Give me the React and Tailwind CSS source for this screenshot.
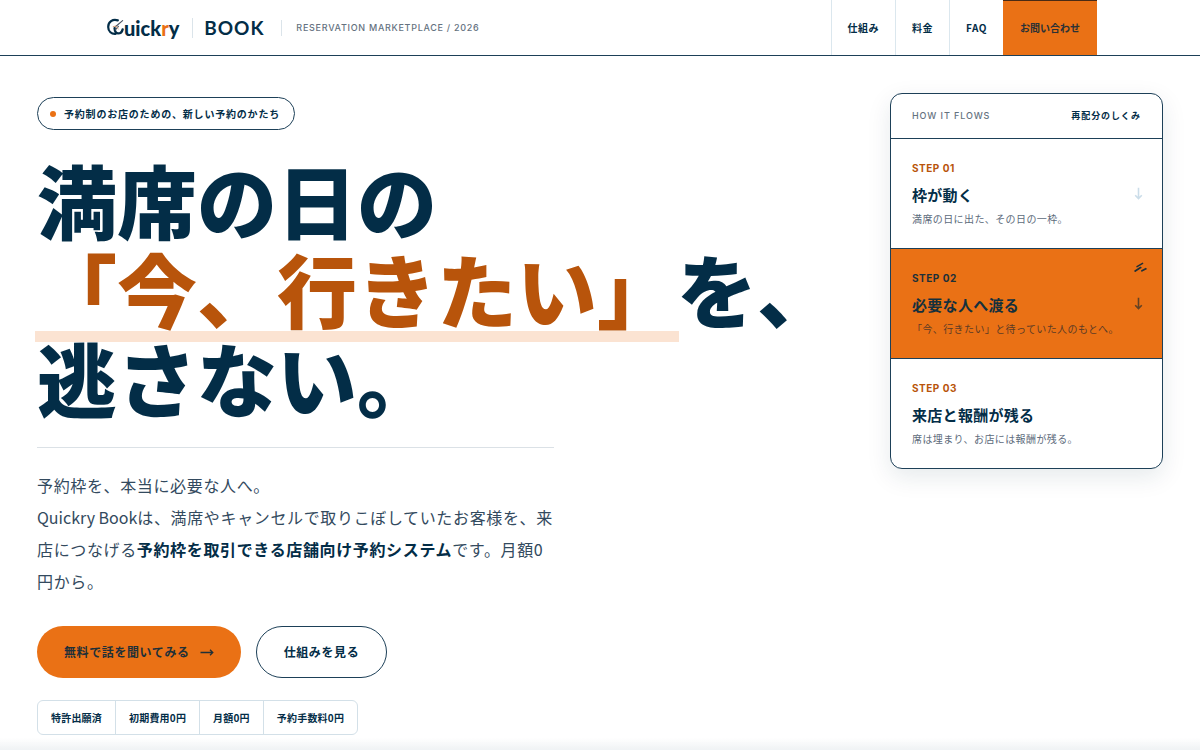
import React from 'react';

const navItems = [
  { label: '仕組み', href: '#flow' },
  { label: '料金', href: '#price' },
  { label: 'FAQ', href: '#faq' },
];

const steps = [
  { no: 'STEP 01', title: '枠が動く', text: '満席の日に出た、その日の一枠。', arrow: true },
  { no: 'STEP 02', title: '必要な人へ渡る', text: '「今、行きたい」と待っていた人のもとへ。', arrow: true, active: true },
  { no: 'STEP 03', title: '来店と報酬が残る', text: '席は埋まり、お店には報酬が残る。' },
];

const tags = ['特許出願済', '初期費用0円', '月額0円', '予約手数料0円'];

function QuickryLogo() {
  return (
    <span className="flex items-center">
      <svg width="17" height="20" viewBox="0 0 17 20" fill="none" aria-hidden="true">
        <path d="M10.8 2.4C5.6.6 1.2 4.1 1.2 8.9c0 4.6 3.4 7.3 7.2 7" stroke="#032d47" strokeWidth="2.2" strokeLinecap="round" />
        <path d="M7.6 10.2c.2 3.4 1.4 5.2 3.6 5.2 2.4 0 3.8-1.4 4.4-4" stroke="#032d47" strokeWidth="2.4" strokeLinecap="round" />
        <path d="M15.6 2.6 8.4 8.8M11.4 8.4l-3 3.4" stroke="#4b5563" strokeWidth="1.2" strokeLinecap="round" />
        <path d="m6.2 8.6 2.8-.6 2.2 3" stroke="#d9a37c" strokeWidth="1" strokeLinecap="round" />
      </svg>
      <span className="font-[Lato,sans-serif] text-[20px] leading-5 font-black">
        uick<span className="text-[#ea7115]">r</span>y
      </span>
    </span>
  );
}

function DownArrow({ className }) {
  return (
    <svg className={className} width="9" height="13" viewBox="0 0 9 13" fill="none" stroke="currentColor" strokeWidth="1.6" aria-hidden="true">
      <path d="M4.5 .8v10.6M1.2 8.2l3.3 3.3 3.3-3.3" />
    </svg>
  );
}

function Spark() {
  return (
    <svg className="absolute top-[13px] right-[15px]" width="13" height="11" viewBox="0 0 13 11" fill="none" stroke="#1f2f38" strokeLinecap="round" aria-hidden="true">
      <path d="M3 4.6 8.6 1.4" strokeWidth="1.5" />
      <path d="M1.2 9 6.6 5.6" strokeWidth="1.8" />
      <path d="m8 8.8 3.8-2" strokeWidth="1.8" />
    </svg>
  );
}

function Step({ step }) {
  const { active } = step;
  return (
    <li className={`relative flex items-center justify-between border-t border-[#1d4058] px-[21px] pt-[21px] pb-[21px] ${active ? 'bg-[#ea7115]' : ''}`}>
      <div>
        <p className={`font-[Inter,sans-serif] text-[10px] leading-4 font-bold tracking-wider ${active ? 'text-[#1c3039]' : 'text-[#b8540b]'}`}>{step.no}</p>
        <h3 className={`mt-[7px] text-[15px] leading-6 font-bold tracking-[0.02em] ${active ? 'text-[#14303d]' : ''}`}>{step.title}</h3>
        <p className={`mt-1 text-[10px] leading-4 tracking-[0.04em] whitespace-nowrap ${active ? 'text-[#5c3b25]' : 'text-[#5d6b7b]'}`}>{step.text}</p>
      </div>
      {step.arrow && <DownArrow className={`absolute right-[19px] ${active ? 'text-[#634224]' : 'text-[#cbdde9]'}`} />}
      {active && <Spark />}
    </li>
  );
}

export default function App() {
  return (
    <div className="min-h-screen bg-white font-['Noto_Sans_CJK_JP',sans-serif] text-[#032d47]">
      <header className="border-b border-[#1d4058]">
        <div className="mx-auto flex h-[55px] max-w-[994px] items-stretch justify-between">
          <div className="flex items-center pl-1">
            <a href="#top" aria-label="Quickry Book" className="flex items-center">
              <QuickryLogo />
              <span className="ml-[13px] h-5 w-px bg-[#dbe4ea]" />
              <span className="ml-[11px] font-[Lato,sans-serif] text-[19px] leading-6 font-bold tracking-wider">BOOK</span>
            </a>
            <span className="ml-[17px] h-4 w-px bg-[#dbe4ea]" />
            <span className="ml-3.5 font-[Inter,sans-serif] text-[9px] leading-4 font-medium tracking-[0.08em] text-[#65727f]">RESERVATION MARKETPLACE / 2026</span>
          </div>
          <nav className="flex items-stretch text-[10px] font-bold">
            {navItems.map((item) => (
              <a key={item.label} href={item.href} className="flex items-center border-l border-[#dbe7ee] px-4 pb-px tracking-wider">{item.label}</a>
            ))}
            <a href="#contact" className="flex items-center border-t border-[#4a2a14] bg-[#ea7115] px-[17px] pb-0.5 text-[#2b3136]">お問い合わせ</a>
          </nav>
        </div>
      </header>

      <main id="top" className="mx-auto flex max-w-[1200px] items-start justify-between px-[37px] pt-[37px] pb-4">
        <section>
          <p className="mt-1 inline-flex h-[33px] items-center gap-2 rounded-full border border-[#1d4058] px-3 text-[10px] font-bold">
            <span className="size-1.5 rounded-full bg-[#ea7115]" />
            <span className="pr-0.5 tracking-[0.08em]">予約制のお店のための、新しい予約のかたち</span>
          </p>
          <h1 className="mt-6 text-[80px] leading-[89px] font-black whitespace-nowrap">
            満席の日の
            <br />
            <span className="relative inline-block text-[#b8540b]">
              <span className="absolute -inset-x-0.5 -bottom-2.5 h-[11px] bg-[#fbe3d2]" />
              <span className="relative">「今、行きたい」</span>
            </span>
            を、
            <br />
            逃さない。
          </h1>
          <div className="mt-[26px] max-w-[517px] border-t border-[#dbe1e6] pt-[21px]" />
          <p className="max-w-[520px] text-base leading-8 tracking-[0.04em] text-[#334a5e]">
            予約枠を、本当に必要な人へ。
            <br />
            <span className="tracking-normal">Quickry Book</span>は、満席やキャンセルで取りこぼしていたお客様を、来店につなげる
            <strong className="font-bold text-[#032d47]">予約枠を取引できる店舗向け予約システム</strong>
            です。月額0円から。
          </p>
          <div className="mt-[29px] flex gap-[15px] text-[12px] font-bold tracking-wider">
            <a href="#contact" className="flex h-[52px] items-center gap-2.5 rounded-full bg-[#ea7115] px-[27px] text-[#1f3038]">
              無料で話を聞いてみる
              <svg width="14" height="9" viewBox="0 0 14 9" fill="none" stroke="currentColor" strokeWidth="1.3" aria-hidden="true">
                <path d="M.5 4.5h12M10 1.8l2.8 2.7L10 7.2" />
              </svg>
            </a>
            <a href="#flow" className="flex h-[52px] items-center rounded-full border border-[#1d4058] px-[27px]">仕組みを見る</a>
          </div>
          <ul className="mt-[22px] inline-flex h-[35px] divide-x divide-[#d3e0e8] rounded-md border border-[#d3e0e8] text-[10px] font-bold tracking-[0.02em]">
            {tags.map((tag) => (
              <li key={tag} className="flex items-center px-[13px]">{tag}</li>
            ))}
          </ul>
        </section>

        <aside id="flow" className="w-[273px] shrink-0 overflow-hidden rounded-xl border border-[#1d4058] bg-white shadow-[0_8px_24px_rgba(3,45,71,0.10)]">
          <div className="flex h-11 items-center justify-between px-[21px]">
            <span className="font-[Inter,sans-serif] text-[9px] font-medium tracking-widest text-[#65727f]">HOW IT FLOWS</span>
            <h2 className="text-[9px] font-bold tracking-widest">再配分のしくみ</h2>
          </div>
          <ol>
            {steps.map((step) => (
              <Step key={step.no} step={step} />
            ))}
          </ol>
        </aside>
      </main>
      <div className="pointer-events-none fixed inset-x-0 bottom-0 h-3 bg-linear-to-b from-transparent to-[#eff2f4]" />
    </div>
  );
}
